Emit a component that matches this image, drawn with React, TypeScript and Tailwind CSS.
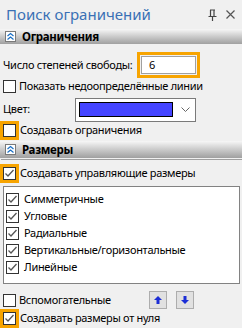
import React from "react";

const font = { fontFamily: '"Noto Sans", "Open Sans", sans-serif' };

function Check({ checked }: { checked?: boolean }) {
  return (
    <div className="w-[13px] h-[13px] border border-[#333333] bg-white flex items-center justify-center shrink-0">
      {checked && (
        <svg width="11" height="11" viewBox="0 0 11 11">
          <path d="M1.5 5.5 L4 8 L9.5 2" fill="none" stroke="#555555" strokeWidth="1.3" />
        </svg>
      )}
    </div>
  );
}

function Orange({ children }: { children: React.ReactNode }) {
  return <div className="border-[3px] border-[#f7a400] w-[19px] h-[19px] flex items-center justify-center shrink-0">{children}</div>;
}

function HeaderIcon() {
  return (
    <div className="w-[11px] h-[11px] border border-[#7a7a7a] bg-white flex items-center justify-center">
      <svg width="9" height="9" viewBox="0 0 9 9">
        <path d="M1.5 4 L4.5 1.5 L7.5 4 M1.5 7.5 L4.5 5 L7.5 7.5" fill="none" stroke="#1a6fc4" strokeWidth="1.2" />
      </svg>
    </div>
  );
}

function Arrow({ up }: { up?: boolean }) {
  return (
    <div className="w-[18px] h-[18px] border border-[#adadad] bg-[#e1e1e1] flex items-center justify-center">
      <svg width="10" height="10" viewBox="0 0 10 10">
        {up ? (
          <path d="M5 1 L9 5 L6.5 5 L6.5 9 L3.5 9 L3.5 5 L1 5 Z" fill="#1b2dd6" />
        ) : (
          <path d="M5 9 L9 5 L6.5 5 L6.5 1 L3.5 1 L3.5 5 L1 5 Z" fill="#1b2dd6" />
        )}
      </svg>
    </div>
  );
}

export default function App() {
  const items = ["Симметричные", "Угловые", "Радиальные", "Вертикальные/горизонтальные", "Линейные"];
  return (
    <div className="w-[242px] h-[328px] bg-[#f0f0f0] overflow-hidden text-[11px] tracking-[-0.3px] text-black whitespace-nowrap" style={font}>
      <div className="h-[29px] flex items-center pl-[6px] pr-[6px] tracking-normal">
        <span className="text-[15px] text-[#3a70b5] leading-none">Поиск ограничений</span>
        <div className="ml-auto flex items-center gap-[9px] pr-[1px]">
          <svg width="9" height="12" viewBox="0 0 9 12">
            <path d="M2 1 H7 M2.5 1 V7 M6 1 V7 M0.5 7.5 H8.5 M4.5 7.5 V12" fill="none" stroke="#444" strokeWidth="1.2" />
          </svg>
          <svg width="9" height="9" viewBox="0 0 9 9">
            <path d="M0.5 0.5 L8.5 8.5 M8.5 0.5 L0.5 8.5" fill="none" stroke="#555" strokeWidth="1.2" />
          </svg>
        </div>
      </div>
      <div className="h-[15px] flex items-center bg-gradient-to-b from-[#f7f7f7] to-[#a0a0a0] pl-[5px]">
        <HeaderIcon />
        <span className="ml-[6px] text-[11.5px] font-bold leading-none">Ограничения</span>
      </div>
      <div className="mt-[8px] h-[26px] flex items-center">
        <span className="pl-[3px] w-[137px]">Число степеней свободы:</span>
        <div className="border-[3px] border-[#f7a400] w-[63px] h-[26px] p-[1px]">
          <div className="w-full h-full border border-[#a0a0a0] bg-white flex items-center pl-[7px]">6</div>
        </div>
      </div>
      <div className="mt-[2px] h-[13px] flex items-center pl-[3px] gap-[3px]">
        <Check />
        <span>Показать недоопределённые линии</span>
      </div>
      <div className="mt-[5px] h-[23px] flex items-center">
        <span className="pl-[3px] w-[75px]">Цвет:</span>
        <div className="w-[121px] h-[24px] border border-[#7a7a7a] bg-white flex items-center pl-[3px]">
          <div className="w-[94px] h-[15px] border border-black bg-[#4444ff]" />
          <svg className="ml-[8px]" width="9" height="6" viewBox="0 0 9 6">
            <path d="M0.5 0.5 L4.5 4.5 L8.5 0.5" fill="none" stroke="#666" strokeWidth="1" />
          </svg>
        </div>
      </div>
      <div className="h-[19px] flex items-center">
        <Orange><Check /></Orange>
        <span className="ml-[1px]">Создавать ограничения</span>
      </div>
      <div className="mt-[1px]">
        <div className="h-[17px] flex items-center bg-gradient-to-b from-[#f7f7f7] to-[#a0a0a0] pl-[5px]">
          <HeaderIcon />
          <span className="ml-[6px] text-[11.5px] font-bold leading-none">Размеры</span>
        </div>
        <div className="h-[1px] bg-[#a0a0a0] mt-[1px] ml-[1px]" />
      </div>
      <div className="mt-[4px] h-[19px] flex items-center">
        <Orange><Check checked /></Orange>
        <span className="ml-[1px]">Создавать управляющие размеры</span>
      </div>
      <div className="mt-[3px] ml-[3px] w-[237px] h-[98px] border border-[#828282] bg-white pt-[4px]">
        {items.map((t) => (
          <div key={t} className="h-[17px] flex items-center pl-[2px] gap-[5px]">
            <Check checked />
            <span>{t}</span>
          </div>
        ))}
      </div>
      <div className="mt-[7px] h-[18px] flex items-center">
        <div className="pl-[3px] flex items-center gap-[3px] w-[149px] h-[12px]">
          <Check />
          <span>Вспомогательные</span>
        </div>
        <Arrow up />
        <div className="w-[9px]" />
        <Arrow />
      </div>
      <div className="h-[19px] flex items-center">
        <Orange><Check checked /></Orange>
        <span className="ml-[1px]">Создавать размеры от нуля</span>
      </div>
    </div>
  );
}
